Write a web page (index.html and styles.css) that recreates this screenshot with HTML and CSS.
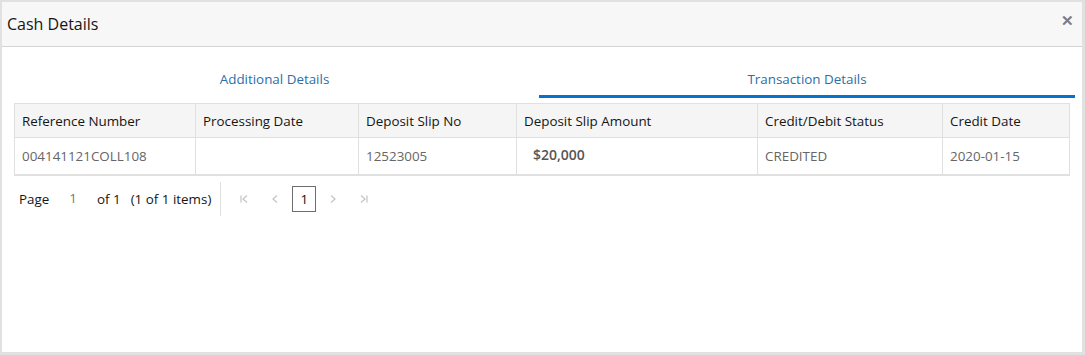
FILE: index.html
```html
<!DOCTYPE html>
<html lang="en">
<head>
  <meta charset="UTF-8">
  <title>Cash Details</title>
  <link rel="stylesheet" href="styles.css">
</head>
<body>
  <div class="dialog">
    <div class="dialog-header">
      <h2>Cash Details</h2>
      <span class="close">&#x2715;</span>
    </div>
    <div class="dialog-body">
      <div class="tabs">
        <div class="tab first">Additional Details</div>
        <div class="tab active">Transaction Details</div>
      </div>
      <table class="grid">
        <thead>
          <tr>
            <th class="c1">Reference Number</th>
            <th class="c2">Processing Date</th>
            <th class="c3">Deposit Slip No</th>
            <th class="c4">Deposit Slip Amount</th>
            <th class="c5">Credit/Debit Status</th>
            <th class="c6">Credit Date</th>
          </tr>
        </thead>
        <tbody>
          <tr>
            <td>004141121COLL108</td>
            <td></td>
            <td>12523005</td>
            <td class="amount"><span>$20,000</span></td>
            <td>CREDITED</td>
            <td>2020-01-15</td>
          </tr>
        </tbody>
      </table>
      <div class="pager">
        <div class="pager-info">
          <span>Page</span>
          <span class="cur">1</span>
          <span>of 1</span>
          <span>(1 of 1 items)</span>
        </div>
        <div class="pager-nav">
          <svg class="nav-first" width="10" height="10" viewBox="0 0 10 10"><path d="M2 1.5v7M8 1.5L4 5l4 3.5" fill="none" stroke="#c4c4c4" stroke-width="1.2"/></svg>
          <svg class="nav-prev" width="10" height="10" viewBox="0 0 10 10"><path d="M7 1.5L3 5l4 3.5" fill="none" stroke="#c4c4c4" stroke-width="1.2"/></svg>
          <span class="page-box">1</span>
          <svg class="nav-next" width="10" height="10" viewBox="0 0 10 10"><path d="M3 1.5L7 5l-4 3.5" fill="none" stroke="#c4c4c4" stroke-width="1.2"/></svg>
          <svg class="nav-last" width="10" height="10" viewBox="0 0 10 10"><path d="M8 1.5v7M2 1.5L6 5l-4 3.5" fill="none" stroke="#c4c4c4" stroke-width="1.2"/></svg>
        </div>
      </div>
    </div>
  </div>
</body>
</html>
```

FILE: styles.css
```css
body {
  margin: 0;
  font-family: "Open Sans", "Noto Sans", sans-serif;
  color: #161513;
  background: #fff;
}

.dialog {
  width: 1085px;
  height: 355px;
  box-sizing: border-box;
  border: 2px solid #e1e1e1;
  border-right-width: 3px;
  border-bottom-width: 3px;
}

.dialog-header {
  height: 44px;
  background-color: #f7f7f7;
  border-bottom: 1px solid #d4d4d4;
  display: flex;
  align-items: center;
  justify-content: space-between;
  padding: 0 8px 0 5px;
}

.dialog-header h2 {
  margin: 0;
  font-size: 16px;
  font-weight: normal;
  color: #161513;
}

.close {
  font-size: 15px;
  font-weight: bold;
  color: #7c7c7c;
  margin-bottom: 8px;
}

.dialog-body {
  padding: 17px 7px 0 8px;
}

.tabs {
  display: flex;
}

.tab {
  flex: 1;
  text-align: center;
  font-size: 13.4px;
  color: #2a6fa8;
  line-height: 31px;
  border-bottom: 3px solid transparent;
}

.tab.first {
  flex: 0 0 529px;
}

.tab.active {
  border-bottom-color: #0572ce;
}

.grid {
  width: 1056px;
  margin: 5px 0 0 4px;
  border-collapse: collapse;
  font-size: 13.4px;
  border: 1px solid #e0e0e0;
  border-bottom-width: 2px;
}

.grid th,
.grid td {
  border: 1px solid #e0e0e0;
  text-align: left;
  padding: 0 7px;
  white-space: nowrap;
}

.grid th {
  background-color: #f5f5f5;
  font-weight: normal;
  height: 33px;
  color: #161513;
}

.grid td {
  height: 36px;
  color: #666;
}

.grid td.amount {
  color: #555;
  font-weight: 600;
  font-size: 14px;
  padding-left: 16px;
}

.amount span {
  display: inline-block;
  margin-bottom: 3px;
}

.c1 { width: 166px; }
.c2 { width: 148px; }
.c3 { width: 143px; }
.c4 { width: 226px; }
.c5 { width: 170px; }

.pager {
  display: flex;
  align-items: center;
  margin: 6px 0 0 4px;
  font-size: 13.4px;
}

.pager-info {
  display: flex;
  gap: 10px;
  padding: 0 9px 0 5px;
  border-right: 1px solid #e0e0e0;
  height: 34px;
  align-items: center;
}

.pager-info .cur {
  color: #777;
  margin: -3px 10px 0 10px;
}

.pager-nav {
  display: flex;
  align-items: center;
  padding-left: 18px;
}

.nav-prev { margin-left: 21px; }
.nav-next { margin-left: 12px; }
.nav-last { margin-left: 21px; }

.page-box {
  border: 1px solid #6d6d6d;
  width: 22px;
  height: 24px;
  line-height: 24px;
  text-align: center;
  margin-left: 12px;
}
```
